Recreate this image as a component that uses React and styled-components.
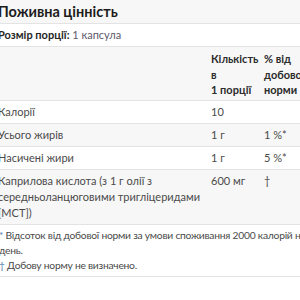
import React from "react";
import styled, { createGlobalStyle } from "styled-components";

const GlobalStyle = createGlobalStyle`
  html, body {
    margin: 0;
    padding: 0;
    background: #ffffff;
    overflow: hidden;
  }
  body {
    font-family: Lato, "Liberation Sans", sans-serif;
  }
`;

const Panel = styled.div`
  width: 318px;
  margin-left: -3px;
  background: #ffffff;
`;

const Title = styled.h2`
  margin: 0;
  padding: 0 0 0 1px;
  height: 23px;
  line-height: 24px;
  font-size: 14.5px;
  font-weight: 700;
  color: #1c1c1c;
  background: #f7f7f7;
  border-bottom: 1px solid #e3e3e3;
`;

const Serving = styled.div`
  padding: 3px 0 3px 1px;
  line-height: 16px;
  font-size: 11px;
  color: #5d5a6b;
  border-bottom: 1px solid #e3e3e3;
  b {
    color: #262626;
    font-weight: 700;
  }
`;

const Table = styled.div`
  display: grid;
  grid-template-columns: 213px 53px 1fr;
`;

const Cell = styled.div`
  padding: ${(p) => (p.$head ? "4px 4px 2px 1px" : "3px 8px 3px 1px")};
  line-height: ${(p) => (p.$head ? "15.5px" : "16px")};
  font-size: 11px;
  font-weight: ${(p) => (p.$head ? 700 : 400)};
  color: ${(p) => (p.$head ? "#2b2b2b" : "#4a4a4a")};
  background: ${(p) => (p.$shade ? "#f7f7f7" : "#ffffff")};
  border-bottom: 1px solid #e3e3e3;
  white-space: ${(p) => (p.$head ? "nowrap" : "normal")};
`;

const Footer = styled.div`
  padding: 3px 0 3px 2px;
  line-height: 15px;
  font-size: 10.3px;
  letter-spacing: -0.25px;
  color: #4a4a4a;
  border-bottom: 1px solid #e3e3e3;
`;

const Mark = styled.span`
  color: #5b7fb4;
`;

const rows = [
  { name: "Калорії", amount: "10", dv: "" },
  { name: "Усього жирів", amount: "1 г", dv: "1 %*" },
  { name: "Насичені жири", amount: "1 г", dv: "5 %*" },
  {
    name: "Каприлова кислота (з 1 г олії з середньоланцюговими тригліцеридами [МСТ])",
    amount: "600 мг",
    dv: "†",
  },
];

export default function App() {
  return (
    <>
      <GlobalStyle />
      <Panel>
        <Title>Поживна цінність</Title>
        <Serving>
          <b>Розмір порції:</b> 1 капсула
        </Serving>
        <Table>
          <Cell $head $shade />
          <Cell $head $shade>
            Кількість
            <br />в<br />1 порції
          </Cell>
          <Cell $head $shade>
            % від
            <br />
            добової
            <br />
            норми
          </Cell>
          {rows.map((r, i) => {
            const shade = i % 2 === 1;
            return (
              <React.Fragment key={i}>
                <Cell $shade={shade}>{r.name}</Cell>
                <Cell $shade={shade}>{r.amount}</Cell>
                <Cell $shade={shade}>{r.dv}</Cell>
              </React.Fragment>
            );
          })}
        </Table>
        <Footer>
          <Mark>*</Mark> Відсоток від добової норми за умови споживання 2000
          калорій на день.
          <br />
          <Mark>†</Mark> Добову норму не визначено.
        </Footer>
      </Panel>
    </>
  );
}
